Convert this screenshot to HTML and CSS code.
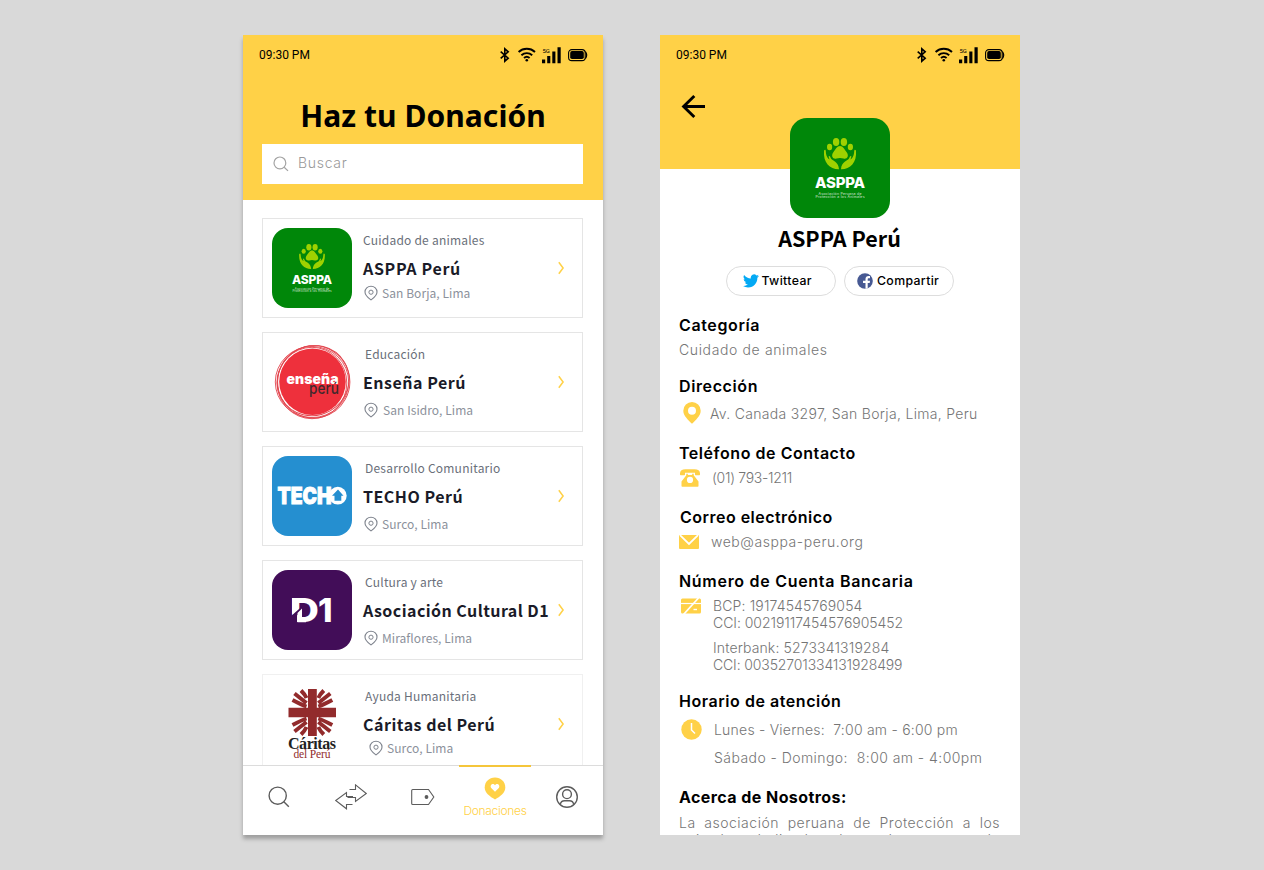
FILE: index.html
```html
<!DOCTYPE html>
<html lang="es">
<head>
<meta charset="utf-8">
<title>Haz tu Donación</title>
<link rel="stylesheet" href="styles.css">
</head>
<body>
<svg class="defs" aria-hidden="true">
  <symbol id="status" viewBox="0 0 90 18">
    <path d="M.7 5.600L8.200 12.200L4.800 15.200V2.800L8.200 5.800L.7 12.400" fill="none" stroke="#000" stroke-width="1.600"/>
    <g fill="none" stroke="#000" stroke-width="1.900"><path d="M18.600 6a12 12 0 0 1 16.400 0"/><path d="M21.400 9.200a8 8 0 0 1 10.800 0"/><path d="M24 12a4.200 4.200 0 0 1 5.600 0"/></g>
    <circle cx="26.800" cy="14.200" r="1.300"/>
    <text x="42.400" y="7.400" font-family="Roboto" font-size="6">5G</text>
    <path d="M42 13.600h3.200v3.600h-3.200zM47.200 10h3.100v7.200h-3.100zM52.300 5.600h3.100v11.600h-3.100zM57.500 1.300h3.200v15.900h-3.200z"/>
    <rect x="68.600" y="3.600" width="16.600" height="11" rx="3.200" fill="none" stroke="#000" stroke-width="1.100"/>
    <rect x="70.200" y="5.100" width="13.600" height="8" rx="1.800"/>
    <path d="M85.400 5.600q2.600 3.500 0 7" fill="none" stroke="#000" stroke-width="1.200"/>
  </symbol>
  <symbol id="asppa" viewBox="0 0 100 100">
    <rect width="100" height="100" fill="#008709"/>
    <g fill="#9fd100">
      <ellipse cx="46.100" cy="24" rx="3.200" ry="4"/><ellipse cx="53.900" cy="24" rx="3.200" ry="4"/>
      <ellipse cx="39.600" cy="29" rx="2.600" ry="3.200"/><ellipse cx="60.400" cy="29" rx="2.600" ry="3.200"/>
      <path d="M50 28C53 28 54.500 31.500 56.500 34C59.500 38 57 41.500 53.500 40.500Q50 39.500 46.500 40.500C43 41.500 40.500 38 43.500 34C45.500 31.500 47 28 50 28Z"/>
      <path d="M34 32.500Q35.500 31 35.800 33C36 38 37.500 40 39.500 41.500L38.600 38.600Q39.500 37 41 40.500C42 43 48.500 43 49 51.300C40 51.500 33 45 34 32.500Z"/>
      <path d="M66 32.500Q64.500 31 64.200 33C64 38 62.500 40 60.500 41.500L61.400 38.600Q60.500 37 59 40.500C58 43 51.500 43 51 51.300C60 51.500 67 45 66 32.500Z"/>
    </g>
    <g fill="#fff" text-anchor="middle" font-family="Inter">
      <text x="50" y="69.800" font-size="15" font-weight="800" textLength="50">ASPPA</text>
      <text x="50" y="77" font-size="3.500" textLength="43" opacity=".8">Asociación Peruana de</text>
      <text x="50" y="80.400" font-size="3.500" textLength="49" opacity=".8">Protección a los Animales</text>
    </g>
  </symbol>
  <symbol id="pin" viewBox="0 0 14 16">
    <path d="M7 1.200C3.600 1.200 1 3.700 1 6.900C1 10.500 4.800 13.200 7 14.900C9.200 13.200 13 10.500 13 6.900C13 3.700 10.400 1.200 7 1.200Z" fill="none" stroke="#7d828c" stroke-width="1.100"/>
    <circle cx="7" cy="7.200" r="2.100" fill="none" stroke="#7d828c"/>
  </symbol>
  <symbol id="chev" viewBox="0 0 8 14"><path d="M1.800 1.200L6.100 7L1.800 12.800" fill="none" stroke="#ffd147" stroke-width="1.500"/></symbol>
</svg>

<main class="board">
  <section class="phone phone-list">
    <header class="list-head">
      <div class="status"><span class="time">09:30 PM</span><svg class="status-icons"><use href="#status"/></svg></div>
      <h1 class="title">Haz tu Donación</h1>
      <div class="search">
        <svg width="16" height="16" viewBox="0 0 16 16" fill="none" stroke="#a3a3a3" stroke-width="1.200"><circle cx="6.900" cy="6.900" r="5.900"/><path d="M11.200 11.200L15 14.900"/></svg>
        <span class="search-text">Buscar</span>
      </div>
    </header>

    <div class="cards">
      <article class="card first">
        <svg class="logo rounded"><use href="#asppa"/></svg>
        <div class="info"><p class="cat flush">Cuidado de animales</p><h2 class="org wide">ASPPA Perú</h2><p class="loc raised"><svg class="pin"><use href="#pin"/></svg>San Borja, Lima</p></div>
        <svg class="chev"><use href="#chev"/></svg>
      </article>
      <article class="card">
        <svg class="logo" viewBox="0 0 80 80">
          <circle cx="40.500" cy="39.700" r="33.300" fill="#ee303c"/>
          <g fill="none" stroke="#e2444d" stroke-width=".9"><ellipse cx="40" cy="40" rx="36.700" ry="35.600"/><ellipse cx="41.600" cy="39.500" rx="36" ry="36.200" transform="rotate(30 41 40)"/><ellipse cx="40" cy="41" rx="34.800" ry="35.700"/><ellipse cx="41.300" cy="38.700" rx="36.400" ry="34.700" transform="rotate(-30 41 39)"/></g>
          <text x="14.500" y="42.400" class="ens-a" textLength="52">enseña</text>
          <text x="37" y="52" class="ens-b" textLength="30" lengthAdjust="spacingAndGlyphs">perú</text>
        </svg>
        <div class="info"><p class="cat">Educación</p><h2 class="org">Enseña Perú</h2><p class="loc spaced"><svg class="pin"><use href="#pin"/></svg>San Isidro, Lima</p></div>
        <svg class="chev"><use href="#chev"/></svg>
      </article>
      <article class="card">
        <svg class="logo rounded" viewBox="0 0 80 80">
          <rect width="80" height="80" fill="#258fd0"/>
          <text x="5.500" y="48" class="techo" textLength="54" lengthAdjust="spacingAndGlyphs">TECH</text>
          <circle cx="65.800" cy="39.700" r="8.900" fill="#fff"/>
          <path d="M66 33.500L71.500 39.700H69.300V44.800H62.500V39.700H60Z" fill="#258fd0"/>
        </svg>
        <div class="info"><p class="cat">Desarrollo Comunitario</p><h2 class="org">TECHO Perú</h2><p class="loc"><svg class="pin"><use href="#pin"/></svg>Surco, Lima</p></div>
        <svg class="chev"><use href="#chev"/></svg>
      </article>
      <article class="card">
        <svg class="logo rounded" viewBox="0 0 80 80">
          <rect width="80" height="80" fill="#420d58"/>
          <text x="18" y="52.200" class="done" textLength="29" lengthAdjust="spacingAndGlyphs">D</text>
          <text x="46" y="52.200" class="done">1</text>
          <path d="M18 47L31 35.500V40L25 45.500V54H18Z" fill="#420d58"/>
          <path d="M20 28h5v11.500L20 44.500zM25.500 43L30 38.500v8.500h4v5.200h-8.500z" fill="#fff"/>
        </svg>
        <div class="info"><p class="cat">Cultura y arte</p><h2 class="org long">Asociación Cultural D1</h2><p class="loc"><svg class="pin"><use href="#pin"/></svg>Miraflores, Lima</p></div>
        <svg class="chev"><use href="#chev"/></svg>
      </article>
      <article class="card faded">
        <svg class="logo" viewBox="0 0 80 80">
          <path d="M36 5h8.800v18.700H64v9.600H44.800V52H36V33.300H16.500v-9.600H36z" fill="#922b2c"/>
          <g fill="none" stroke="#922b2c" stroke-width="3.900">
            <path d="M34.500 22.500Q30 21 20.500 16M34.500 19Q30 15.500 22.500 9.500M34.500 14Q33 10.500 29 6.500"/>
            <path d="M46.300 22.500Q50.800 21 60.300 16M46.300 19Q50.800 15.500 58.300 9.500M46.300 14Q47.800 10.500 51.800 6.500"/>
            <path d="M34.500 34.500Q30 36 20.500 41M34.500 38Q30 41.500 22.500 47.500M34.500 43Q33 46.500 29 50.500"/>
            <path d="M46.300 34.500Q50.800 36 60.300 41M46.300 38Q50.800 41.500 58.300 47.500M46.300 43Q47.800 46.500 51.800 50.500"/>
          </g>
          <text x="16" y="64.500" class="car-a" textLength="48">Cáritas</text>
          <text x="21.500" y="73.700" class="car-b" textLength="37">del Perú</text>
        </svg>
        <div class="info"><p class="cat">Ayuda Humanitaria</p><h2 class="org">Cáritas del Perú</h2><p class="loc inset"><svg class="pin"><use href="#pin"/></svg>Surco, Lima</p></div>
        <svg class="chev"><use href="#chev"/></svg>
      </article>
    </div>

    <nav class="tabs">
      <a class="tab"><svg width="22" height="22" viewBox="0 0 22 22"><circle cx="9.700" cy="9.700" r="8.600"/><path d="M15.800 15.800L20.800 20.800"/></svg></a>
      <a class="tab"><svg width="34" height="28" viewBox="0 0 34 28"><path d="M15.500 6.500H21.500V1.800L32.300 10.500L21.500 18.500V14.500H13.500M18.500 21.500H12.500V25.800L1.700 17.500L12.500 9.500V13.500H19" stroke-width="1.100"/></svg></a>
      <a class="tab"><svg width="26" height="18" viewBox="0 0 26 18"><path d="M1.700 2.500Q1.700 1.500 2.700 1.500H18.500L23.800 9L18.500 16.500H2.700Q1.700 16.500 1.700 15.500Z" stroke-width="1.100"/><circle cx="16.500" cy="9" r="1.200" fill="#5c5c5c"/></svg></a>
      <a class="tab active"><svg width="22" height="23" viewBox="0 0 22 23"><path d="M11 .6C5 .6.700 5 .700 10.500C.700 16 6 19.500 11 22.500C16 19.500 21.300 16 21.300 10.500C21.300 5 17 .6 11 .6Z" fill="#ffd147" stroke="none"/><path d="M11 14.800L7.200 10.900C5.200 8.300 9 5.200 11 8.200C13 5.200 16.800 8.300 14.800 10.900Z" fill="#fff" stroke="none"/></svg><span>Donaciones</span></a>
      <a class="tab"><svg width="24" height="24" viewBox="0 0 24 24"><circle cx="12" cy="12" r="10.300"/><circle cx="12" cy="9.200" r="4.400"/><path d="M5.200 19.500Q6 15.800 9.500 15.800H14.500Q18 15.800 18.800 19.500"/></svg></a>
    </nav>
  </section>

  <section class="phone">
    <header class="detail-head">
      <div class="status"><span class="time">09:30 PM</span><svg class="status-icons"><use href="#status"/></svg></div>
      <svg class="back" viewBox="0 0 26 26" fill="none" stroke="#000" stroke-width="2.900"><path d="M14.300 2L3.600 12.500L14.300 23M3.600 12.500H25"/></svg>
    </header>
    <svg class="big-logo"><use href="#asppa"/></svg>
    <h1 class="org-title">ASPPA Perú</h1>
    <div class="share">
      <button class="pill tw"><svg width="16" height="14" viewBox="0 0 24 20"><path d="M24 2.400a9.800 9.800 0 0 1-2.800.8A5 5 0 0 0 23.300.5a9.900 9.900 0 0 1-3.100 1.200 4.900 4.900 0 0 0-8.400 4.500A14 14 0 0 1 1.700 1a4.900 4.900 0 0 0 1.500 6.600A4.900 4.900 0 0 1 1 7v.1a4.900 4.900 0 0 0 3.900 4.800 5 5 0 0 1-2.200.1 4.900 4.900 0 0 0 4.600 3.400A9.900 9.900 0 0 1 0 17.500 14 14 0 0 0 7.500 19.700c9.100 0 14-7.500 14-14v-.6A10 10 0 0 0 24 2.400z" fill="#03a9f4"/></svg>Twittear</button>
      <button class="pill fb"><svg width="16" height="16" viewBox="0 0 16 16"><circle cx="8" cy="8" r="7.800" fill="#475993"/><path d="M8.500 15.800V10H6V7.700H8.500V6C8.500 4 9.700 3 11.600 3H13V5.200H11.800C10.900 5.200 10.700 5.600 10.700 6.300V7.700H13L12.700 10H10.700V15.400Z" fill="#fff"/></svg>Compartir</button>
    </div>

    <div class="details">
      <section class="block"><h3 class="a1">Categoría</h3><p class="row"><span class="a2">Cuidado de animales</span></p></section>
      <section class="block dir"><h3 class="a1">Dirección</h3>
        <p class="row"><svg class="ico" width="18" height="22" viewBox="0 0 18 22"><path fill-rule="evenodd" d="M9 0a8.700 8.700 0 0 0-8.700 8.700C.3 14 5.500 18 9 21.800C12.500 18 17.700 14 17.700 8.700A8.700 8.700 0 0 0 9 0ZM9 4.800a4 4 0 1 1 0 8a4 4 0 0 1 0-8Z" fill="#ffd147"/></svg><span class="b2">Av. Canada 3297, San Borja, Lima, Peru</span></p></section>
      <section class="block tel"><h3 class="c1">Teléfono de Contacto</h3>
        <p class="row"><svg class="ico" width="20" height="18" viewBox="0 0 20 18"><path d="M5.500.3H14.500Q19.800.3 20 4.200V5.500Q20 6.200 19.300 6.200H15.700Q15 6.200 15 5.500V3.700H5V5.500Q5 6.200 4.300 6.200H.7Q0 6.200 0 5.500V4.200Q.2.3 5.500.3Z" fill="#ffd147"/><path fill-rule="evenodd" d="M6.300 4.700H7.800V6H12.200V4.700H13.700V6.300L18.500 12.500V17Q18.500 17.800 17.700 17.800H2.300Q1.500 17.800 1.500 17V12.500L6.300 6.300ZM10 7.800a3.100 3.100 0 1 0 0 6.200a3.100 3.100 0 0 0 0-6.200Z" fill="#ffd147"/></svg><span class="c2">(01) 793-1211</span></p></section>
      <section class="block mail"><h3 class="d1">Correo electrónico</h3>
        <p class="row"><svg class="ico" width="20" height="14" viewBox="0 0 20 14"><rect width="20" height="14" rx="1" fill="#ffd147"/><path d="M1 .2L10 9L19 .2" fill="none" stroke="#fff" stroke-width="1.800"/></svg><span class="d2">web@asppa-peru.org</span></p></section>
      <section class="block bank"><h3 class="e1">Número de Cuenta Bancaria</h3>
        <div class="row"><svg class="ico" width="20" height="16" viewBox="0 0 20 16"><rect y=".6" width="20" height="15" rx="1.500" fill="#ffd147"/><path d="M0 5.500H20" stroke="#fff" stroke-width="1.200"/><path d="M2.500 16.500L17.500 0" stroke="#fff" stroke-width="1.700"/><path d="M12.500 11.500H16" stroke="#fff" stroke-width="1.400"/></svg>
          <div class="accounts"><p class="e2">BCP: 19174545769054</p><p class="e3">CCI: 00219117454576905452</p><p class="e2 gap">Interbank: 5273341319284</p><p class="e4">CCI: 00352701334131928499</p></div></div></section>
      <section class="block hours"><h3 class="c1">Horario de atención</h3>
        <div class="row"><svg class="ico" width="21" height="21" viewBox="0 0 21 21"><circle cx="10.500" cy="10.500" r="10.200" fill="#ffd147"/><path d="M10.500 4V11L14 14.500" fill="none" stroke="#fff" stroke-width="1.500"/></svg>
          <div class="times"><p class="f2">Lunes - Viernes:  7:00 am - 6:00 pm</p><p class="f3">Sábado - Domingo:  8:00 am - 4:00pm</p></div></div></section>
      <section class="block about"><h3 class="g1">Acerca de Nosotros:</h3><p class="about-text">La asociación peruana de Protección a los animales, dedicada a la ayuda y rescate de animales.</p></section>
    </div>
  </section>
</main>
</body>
</html>
```
FILE: styles.css
```css
* { box-sizing: border-box; }
body { margin: 0; height: 870px; overflow: hidden; background: #d9d9d9; font-family: Inter, "Liberation Sans", sans-serif; }
h1, h2, h3, p { margin: 0; }
.defs { display: none; }
.board { display: flex; gap: 57px; padding: 35px 0 0 243px; }
.phone { width: 360px; height: 800px; overflow: hidden; background: #fff; display: flex; flex-direction: column; flex: none; }
.phone-list { box-shadow: 0 4px 4px rgba(0, 0, 0, .27); }

.status { display: flex; justify-content: space-between; padding: 11px 13px 0 16px; height: 41px; flex: none; }
.time { font: 12px/18px Roboto, sans-serif; }
.status-icons { width: 90px; height: 18px; }

.list-head { height: 165px; background: #ffd147; flex: none; }
.title { font: 700 30px/40px "Noto Sans", sans-serif; text-align: center; margin-top: 20px; letter-spacing: .06px; }
.search { margin: 8px 20px 0 19px; height: 40px; background: #fff; display: flex; align-items: center; padding-left: 11px; gap: 9px; }
.search-text { font-size: 14px; font-weight: 300; line-height: 18px; margin-top: -2px; letter-spacing: .7px; color: #999; }

.cards { flex: 1; min-height: 0; overflow: hidden; padding: 18px 20px 0 19px; display: flex; flex-direction: column; gap: 14px; }
.card { height: 100px; flex: none; border: 1px solid #e5e5e5; display: flex; padding: 9px 17px 0 9px; font-family: "Noto Sans CJK JP", sans-serif; }
.faded { border-color: #f0f0f0; }
.logo { width: 80px; height: 80px; flex: none; }
.rounded { border-radius: 16px; }
.info { flex: 1; padding: 4px 0 0 11px; white-space: nowrap; min-width: 0; }
.cat { font-size: 12px; font-weight: 400; line-height: 16px; letter-spacing: .22px; color: #6a6f7a; padding-left: 2px; }
.flush { padding-left: 0; }
.org { font-size: 16px; font-weight: 700; line-height: 20px; margin-top: 10px; letter-spacing: .5px; color: #1a1b28; }
.wide { letter-spacing: .66px; }
.long { letter-spacing: .44px; }
.loc { display: flex; align-items: center; gap: 4px; padding-left: 1px; font-size: 12px; line-height: 16px; margin-top: 10px; letter-spacing: .06px; color: #8c919b; }
.spaced { gap: 5px; }
.raised { margin-top: 7px; }
.inset { margin-top: 6px; padding-left: 6px; }
.pin { width: 14px; height: 16px; flex: none; }
.chev { width: 8px; height: 14px; margin: 33px 0 0 -1px; flex: none; }

.ens-a { font: 900 14px Inter, sans-serif; fill: #fff; }
.ens-b { font: 500 16px Inter, sans-serif; fill: #41282c; }
.techo { font: 900 23px Inter, sans-serif; fill: #fff; stroke: #fff; stroke-width: .9px; }
.done { font: 800 33px Inter, sans-serif; fill: #fff; }
.car-a { font: 700 16px "Liberation Serif", serif; fill: #222; }
.car-b { font: 11.5px "Liberation Serif", serif; fill: #922b2c; }

.tabs { height: 70px; flex: none; border-top: 1px solid #dcdcdc; display: flex; }
.tab { flex: 1; display: flex; flex-direction: column; align-items: center; padding-top: 20px; height: 69px; }
.tab svg { fill: none; stroke: #5c5c5c; stroke-width: 1.4; }
.tab:nth-child(2) { padding-top: 17px; }
.tab:nth-child(3) { padding-top: 22px; }
.tab:nth-child(5) { padding-top: 19px; }
.tab.active { border-top: 2px solid #f5c63b; margin-top: -1px; padding-top: 10px; height: 70px; }
.active span { font-size: 12px; font-weight: 300; line-height: 16px; letter-spacing: -.32px; color: #ffd147; margin-top: 3px; }

.detail-head { height: 134px; background: #ffd147; flex: none; }
.back { display: block; width: 26px; height: 26px; margin: 18px 0 0 20px; }
.big-logo { width: 100px; height: 100px; border-radius: 17px; margin: -51px auto 0; position: relative; flex: none; }
.org-title { font: 700 21.5px/30px "Noto Sans CJK JP", sans-serif; text-align: center; margin: 5px 1px 0 0; }
.share { display: flex; justify-content: center; gap: 8px; margin-top: 13px; }
.pill { width: 110px; height: 30px; border: 1px solid #ddd; border-radius: 15px; background: #fff; display: flex; align-items: center; padding: 0 0 1px 15.5px; gap: 3px; font: 500 12.3px Inter, sans-serif; letter-spacing: .35px; color: #000; }
.fb { padding-left: 12px; gap: 4px; }

.details { padding: 19px 20px 0 19px; color: #757575; font-size: 14px; font-weight: 300; line-height: 20px; }
.details h3 { font-size: 16px; font-weight: 600; line-height: 20px; color: #000; }
.block p { white-space: pre; }
.row { display: flex; align-items: center; margin-top: 5px; }
.dir { margin-top: 16px; }
.dir .row { margin-top: 8px; padding-left: 5px; gap: 10px; }
.dir .ico { margin: -3px -1px 0; }
.tel { margin-top: 19px; }
.tel .row { padding-left: 1px; gap: 12px; }
.mail { margin-top: 19px; }
.mail h3 { padding-left: 1px; }
.mail .row { gap: 12px; }
.bank { margin-top: 19px; }
.bank .row { align-items: flex-start; margin-top: 6px; padding-left: 2px; gap: 12px; line-height: 17px; }
.bank .ico { margin-top: 1px; }
.gap { margin-top: 8px; }
.hours { margin-top: 18px; }
.hours .row { align-items: flex-start; margin-top: 8px; padding-left: 2px; gap: 12px; }
.times { padding-top: 1px; }
.times p + p { margin-top: 8px; }
.about { margin-top: 19px; }
.details h3.g1 { font-weight: 700; }
.block .about-text { white-space: normal; text-align: justify; line-height: 17px; margin-top: 7px; letter-spacing: .5px; }

.a1 { letter-spacing: .62px; }
.a2 { letter-spacing: .63px; }
.b2 { letter-spacing: .31px; }
.c1 { letter-spacing: .55px; }
.c2 { letter-spacing: -.3px; }
.d1 { letter-spacing: .48px; }
.d2 { letter-spacing: .55px; }
.e1 { letter-spacing: .71px; }
.e2 { letter-spacing: .14px; }
.e3 { letter-spacing: -.04px; }
.e4 { letter-spacing: -.13px; }
.f2 { letter-spacing: .22px; }
.f3 { letter-spacing: .44px; }
.g1 { letter-spacing: .43px; }
```
